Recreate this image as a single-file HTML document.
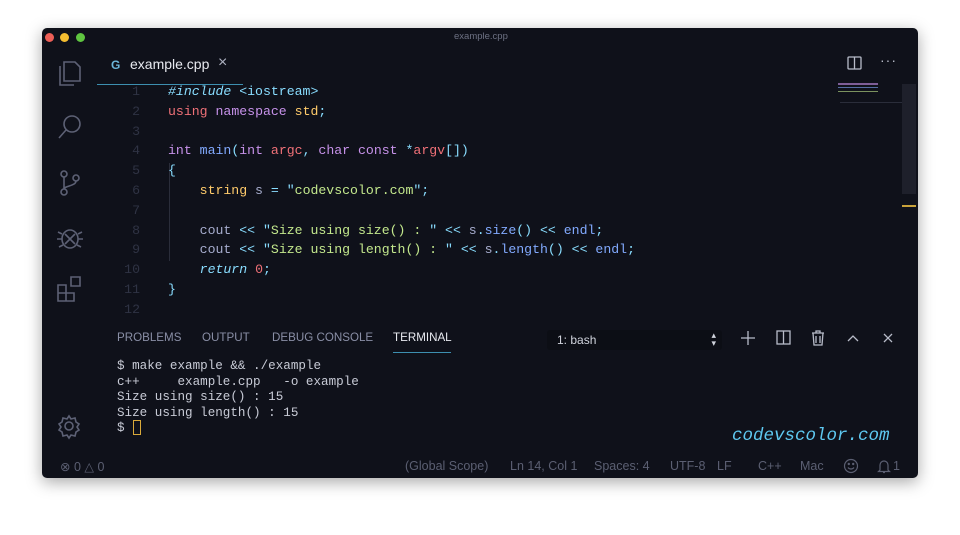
<!DOCTYPE html>
<html><head><style>
*{margin:0;padding:0;box-sizing:border-box}
body{width:960px;height:535px;background:#fff;position:relative;overflow:hidden;font-family:"Liberation Sans",sans-serif}
#win{position:absolute;left:42px;top:28px;width:876px;height:450px;background:#0f111a;border-radius:5px;box-shadow:0 4px 16px rgba(0,0,0,.35);overflow:hidden}
.dot{position:absolute;top:5px;width:9px;height:9px;border-radius:50%}
.abs{position:absolute}
.code{position:absolute;left:126px;top:54px;font-family:"Liberation Mono",monospace;font-size:13.2px;line-height:19.8px;color:#a6accd;white-space:pre}
.ln{position:absolute;left:60px;width:38px;top:54px;text-align:right;font-family:"Liberation Mono",monospace;font-size:13.2px;line-height:19.8px;color:#2f3344;white-space:pre}
.k{color:#c792ea}.r{color:#f07178}.b{color:#82aaff}.y{color:#ffcb6b}.g{color:#c3e88d}.c{color:#89ddff}.o{color:#f78c6c}.i{font-style:italic}.gr{color:#a6accd}
.tab{font-size:11.6px;color:#8a8fa6;position:absolute;top:303px}
.term{position:absolute;left:75px;top:331px;font-family:"Liberation Mono",monospace;font-size:12.6px;line-height:15.5px;color:#c8cbd6;white-space:pre}
.sb{position:absolute;top:431px;font-size:12.5px;color:#5b5f72}
svg{position:absolute}
</style></head><body>
<div id="win">
<div class="dot" style="left:3px;background:#ed5f57"></div>
<div class="dot" style="left:18px;background:#f4bd30"></div>
<div class="dot" style="left:34px;background:#5fc540"></div>
<div class="abs" style="left:412px;top:3px;font-size:9.5px;color:#6d7183">example.cpp</div>
<svg width="52" height="420" style="left:0;top:20px" fill="none" stroke="#5d6175" stroke-width="1.6">
<path d="M22 14h11l5 5v14h-16z M18 18v19h14"/>
<circle cx="30" cy="76" r="8"/><path d="M24 82l-7 8"/>
<circle cx="22" cy="126" r="3"/><circle cx="22" cy="144" r="3"/><circle cx="34" cy="130" r="3"/><path d="M22 129v12 M34 133c0 5-12 5-12 8"/>
<ellipse cx="28" cy="191" rx="8" ry="9"/><path d="M23 186l10 10 M33 186l-10 10 M16 184l4 2 M40 184l-4 2 M15 191h5 M41 191h-5 M17 199l4-2 M39 199l-4-2"/>
<path d="M16 237h8v8h-8z M16 245h8v8h-8z M24 245h8v8h-8z M29 229h9v9h-9z"/>
<circle cx="27" cy="378" r="4"/><path d="M27 368l2 3 4-1 1 4 3 2-2 3 2 3-3 2-1 4-4-1-2 3-2-3-4 1-1-4-3-2 2-3-2-3 3-2 1-4 4 1z"/>
</svg>
<svg width="14" height="14" style="left:68px;top:30px"><text x="1" y="11" font-size="12" font-weight="bold" fill="#6cb6d9" font-family="Liberation Sans">G</text></svg>
<div class="abs" style="left:88px;top:28px;font-size:14px;color:#e8eaf0">example.cpp</div>
<div class="abs" style="left:176px;top:26px;font-size:16px;color:#aeb2c2">×</div>
<div class="abs" style="left:55px;top:56px;width:146px;height:1px;background:#3d8fb0"></div>
<svg width="16" height="14" style="left:805px;top:28px" fill="none" stroke="#b8bcc9" stroke-width="1.3"><rect x="1" y="1" width="13" height="12" rx="1"/><path d="M7.5 1v12"/></svg>
<div class="abs" style="left:838px;top:24px;color:#b8bcc9;font-size:14px;letter-spacing:1px">···</div>
<div class="abs" style="left:860px;top:56px;width:14px;height:110px;background:#1e202b"></div>
<div class="abs" style="left:798px;top:74px;width:62px;height:1px;background:#2a2d3a"></div>
<div class="abs" style="left:860px;top:177px;width:14px;height:2px;background:#c9a23a"></div>
<div class="abs" style="left:796px;top:55px;width:40px;height:14px;opacity:.6;background:linear-gradient(#c792ea 0 2px,transparent 2px 4px,#82aaff 4px 5px,transparent 5px 8px,#c3e88d 8px 9px,transparent 9px)"></div>
<div class="abs" style="left:127px;top:135px;width:1px;height:98px;background:#2a2d3a"></div>
<div class="ln">1
2
3
4
5
6
7
8
9
10
11
12</div>
<div class="code"><span class="c i">#include</span> <span class="c">&lt;iostream&gt;</span>
<span class="r">using</span> <span class="k">namespace</span> <span class="y">std</span><span class="c">;</span>

<span class="k">int</span> <span class="b">main</span><span class="c">(</span><span class="k">int</span> <span class="r">argc</span><span class="c">,</span> <span class="k">char</span> <span class="k">const</span> <span class="c">*</span><span class="r">argv</span><span class="c">[])</span>
<span class="c">{</span>
    <span class="y">string</span> s <span class="c">=</span> <span class="c">"</span><span class="g">codevscolor.com</span><span class="c">";</span>

    cout <span class="c">&lt;&lt;</span> <span class="c">"</span><span class="g">Size using size() : </span><span class="c">"</span> <span class="c">&lt;&lt;</span> s<span class="c">.</span><span class="b">size</span><span class="c">()</span> <span class="c">&lt;&lt;</span> <span class="b">endl</span><span class="c">;</span>
    cout <span class="c">&lt;&lt;</span> <span class="c">"</span><span class="g">Size using length() : </span><span class="c">"</span> <span class="c">&lt;&lt;</span> s<span class="c">.</span><span class="b">length</span><span class="c">()</span> <span class="c">&lt;&lt;</span> <span class="b">endl</span><span class="c">;</span>
    <span class="c i">return</span> <span class="r">0</span><span class="c">;</span>
<span class="c">}</span></div>
<div class="tab" style="left:75px">PROBLEMS</div>
<div class="tab" style="left:160px">OUTPUT</div>
<div class="tab" style="left:230px">DEBUG CONSOLE</div>
<div class="tab" style="left:351px;color:#e8eaf0">TERMINAL</div>
<div class="abs" style="left:351px;top:324px;width:58px;height:1px;background:#3d8fb0"></div>
<div class="abs" style="left:505px;top:302px;width:175px;height:20px;background:#0c0e15;border-radius:3px;color:#d0d3dc;font-size:12px;padding:3px 10px">1: bash<span style="position:absolute;right:6px;top:1px;font-size:9px;line-height:8px">▴<br>▾</span></div>
<svg width="170" height="20" style="left:695px;top:300px" fill="none" stroke="#b8bcc9" stroke-width="1.3">
<path d="M11 3v14M4 10h14"/><rect x="40" y="3" width="13" height="13"/><path d="M46.5 3v13"/>
<path d="M75 5h12M79 5V3h4v2M76 5l1 12h8l1-12M79 8v7M83 8v7"/>
<path d="M111 13l5-5 5 5"/><path d="M147 6l8 8M155 6l-8 8"/></svg>
<div class="term">$ make example &amp;&amp; ./example
c++     example.cpp   -o example
Size using size() : 15
Size using length() : 15
$ </div>
<div class="abs" style="left:91px;top:392px;width:8px;height:15px;border:1.5px solid #d9a93a"></div>
<div class="abs" style="left:690px;top:398px;font-family:'Liberation Mono',monospace;font-style:italic;font-size:17.5px;color:#5ec8f0">codevscolor.com</div>
<div class="sb" style="left:18px">⊗ 0 △ 0</div>
<div class="sb" style="left:363px">(Global Scope)</div>
<div class="sb" style="left:468px">Ln 14, Col 1</div>
<div class="sb" style="left:552px">Spaces: 4</div>
<div class="sb" style="left:628px">UTF-8</div>
<div class="sb" style="left:675px">LF</div>
<div class="sb" style="left:716px">C++</div>
<div class="sb" style="left:758px">Mac</div>
<svg width="16" height="16" style="left:801px;top:430px" fill="none" stroke="#5b5f72" stroke-width="1.2"><circle cx="8" cy="8" r="6.5"/><path d="M5 9.5c1.5 2 4.5 2 6 0"/><circle cx="5.8" cy="6" r=".6"/><circle cx="10.2" cy="6" r=".6"/></svg>
<svg width="14" height="16" style="left:835px;top:430px" fill="none" stroke="#5b5f72" stroke-width="1.2"><path d="M3 12V7a4 4 0 0 1 8 0v5l1.5 1.5h-11z M6 14.5h2"/></svg>
<div class="sb" style="left:851px">1</div>
</div>
</body></html>
